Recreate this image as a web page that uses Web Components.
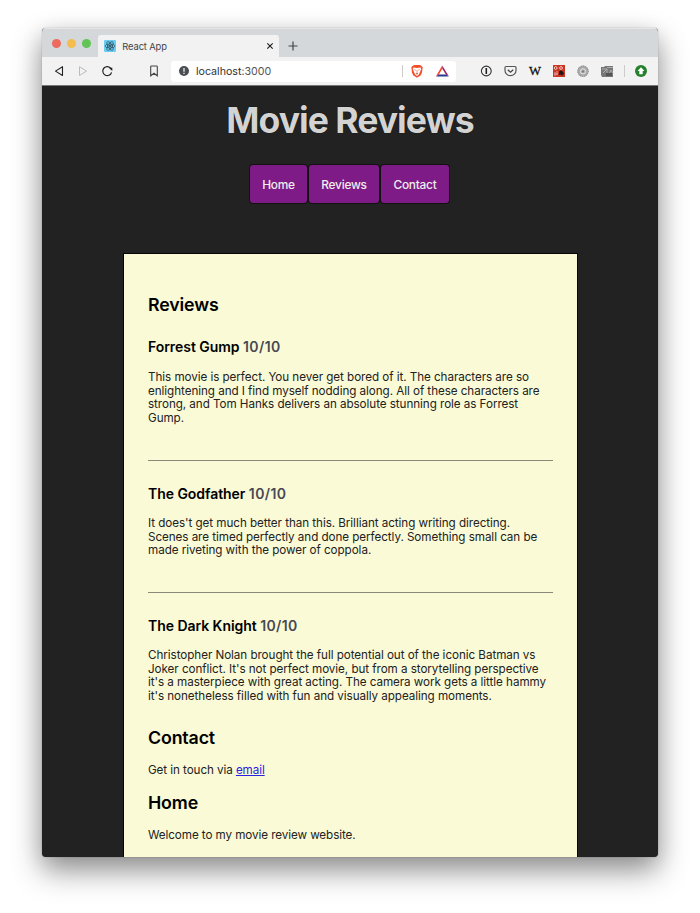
<!DOCTYPE html>
<html lang="en"><head><meta charset="utf-8"><title>React App</title>
<style>
html,body{margin:0;height:913px;overflow:hidden;background:#fff;font-family:Inter,"Liberation Sans",sans-serif}
</style></head><body>
<browser-window>
  <tab-strip slot="tabs">React App</tab-strip>
  <tool-bar slot="tools">localhost<span style="color:#555">:3000</span></tool-bar>
  <site-header>Movie Reviews
    <nav-button slot="nav" style="width:57px">Home</nav-button>
    <nav-button slot="nav" style="width:70px">Reviews</nav-button>
    <nav-button slot="nav" style="width:68px">Contact</nav-button>
  </site-header>
  <content-card>
    <section-title>Reviews</section-title>
    <movie-review movie="Forrest Gump" score="10/10" style="height:136px">This movie is perfect. You never get bored of it. The characters are so<br>enlightening and I find myself nodding along. All of these characters are<br>strong, and Tom Hanks delivers an absolute stunning role as Forrest<br>Gump.</movie-review>
    <movie-review divided movie="The Godfather" score="10/10" style="height:131px">It does't get much better than this. Brilliant acting writing directing.<br>Scenes are timed perfectly and done perfectly. Something small can be<br>made riveting with the power of coppola.</movie-review>
    <movie-review divided movie="The Dark Knight" score="10/10" style="height:131px">Christopher Nolan brought the full potential out of the iconic Batman vs<br>Joker conflict. It's not perfect movie, but from a storytelling perspective<br>it's a masterpiece with great acting. The camera work gets a little hammy<br>it's nonetheless filled with fun and visually appealing moments.</movie-review>
    <section-title>Contact</section-title>
    <text-line>Get in touch via <a href="#" style="color:#2a22e0">email</a></text-line>
    <section-title>Home</section-title>
    <text-line>Welcome to my movie review website.</text-line>
  </content-card>
</browser-window>
<script>
const define=(name,html,setup)=>{
  const t=document.createElement('template');t.innerHTML=html;
  customElements.define(name,class extends HTMLElement{
    constructor(){super();this.attachShadow({mode:'open'}).append(t.content.cloneNode(true));}
    connectedCallback(){if(setup)setup(this,this.shadowRoot);}
  });
};
define('browser-window',`<style>
:host{display:block;padding:28px 42px 0}
.win{height:829px;border-radius:4px;box-shadow:0 0 1px #0008,0 14px 30px #00000068,0 4px 22px #0000001c;background:#222}
.clip{height:829px;border-radius:4px;overflow:hidden}
</style><div class="win"><div class="clip"><slot name="tabs"></slot><slot name="tools"></slot><slot></slot></div></div>`);
define('tab-strip',`<style>
:host{display:flex;height:29px;background:#d4d8db;align-items:flex-end;box-sizing:border-box;border-top:1px solid #e4e6e8}
.lights{display:flex;gap:5.6px;padding:0 7px 9px 10px}
i{width:9.4px;height:9.4px;border-radius:50%}
.tab{display:flex;align-items:center;width:181px;height:22px;background:#f2f2f2;border-radius:3px 3px 0 0;box-sizing:border-box;padding:0 5px 0 6px;font-size:9.4px;color:#444;letter-spacing:-.15px}
.t{margin-left:6px;flex:1}
.plus{margin:0 0 6px 9px}
svg{display:block}
</style>
<div class="lights"><i style="background:#ed6a5e"></i><i style="background:#f5bd4f"></i><i style="background:#61c455"></i></div>
<div class="tab"><svg width="12" height="12" viewBox="0 0 12 12"><rect width="12" height="12" rx="1" fill="#6ccdf3"/><g fill="none" stroke="#26404c" stroke-width=".6"><ellipse cx="6" cy="6" rx="5" ry="2"/><ellipse cx="6" cy="6" rx="5" ry="2" transform="rotate(60 6 6)"/><ellipse cx="6" cy="6" rx="5" ry="2" transform="rotate(120 6 6)"/></g><circle cx="6" cy="6" r="1" fill="#26404c"/></svg><span class="t"><slot></slot></span><svg width="8" height="8" viewBox="0 0 8 8"><path d="M1.3 1.3l5.4 5.4M6.7 1.3L1.3 6.7" stroke="#222" stroke-width="1.2"/></svg></div>
<svg class="plus" width="10" height="10" viewBox="0 0 10 10"><path d="M5 .5v9M.5 5h9" stroke="#444" stroke-width="1.2"/></svg>`);
define('tool-bar',`<style>
:host{display:flex;height:29px;background:#f2f2f2;border-bottom:1px solid #777;box-sizing:border-box;align-items:center}
svg{display:block}
.nav{width:129px;height:28px;flex:none}
.url{width:285px;height:21px;background:#fff;border-radius:3px;display:flex;align-items:center;flex:none}
.addr{font-size:10.7px;color:#333;margin-left:7px;flex:1;letter-spacing:-.03px}
.info{margin-left:8px}
</style>
<svg class="nav" viewBox="0 0 129 28" fill="none"><path d="M20.5 9.7v8.8l-7-4.4z" stroke="#222" stroke-width="1.1" stroke-linejoin="round"/><path d="M37.5 9.7v8.8l7-4.4z" stroke="#bbb" stroke-linejoin="round"/><path d="M69 11.5a4.5 4.5 0 1 0 .6 3.8" stroke="#222" stroke-width="1.2"/><path d="M66.7 10.7h3.6v3.3" fill="#222"/><path d="M108.7 9.8q0-.8.8-.8h5q.8 0 .8.8v9l-3.3-2.6-3.3 2.6z" stroke="#444" stroke-width="1.1"/></svg>
<div class="url"><svg class="info" width="10" height="10" viewBox="0 0 10 10"><circle cx="5" cy="5" r="5" fill="#4b4e52"/><path d="M5 2v3.8M5 6.8v1.3" stroke="#fff" stroke-width="1.2"/></svg><span class="addr"><slot></slot></span>
<svg width="56" height="21" viewBox="400 61 56 21"><path d="M402.5 65v12" stroke="#ccc"/><path d="M414 65h6l2.7 2-.8 6-1.4 2.5-3.5 2.3-3.5-2.3-1.4-2.5-.8-6z" fill="#f3502a"/><path d="M413.5 67.4l3.5.5 3.5-.5.7 1.5-1.4 3.5-1.1 2.3-1.7 1.2-1.7-1.2-1.1-2.3-1.4-3.5z" fill="#fff"/><path d="M414.4 69.5l1.5.8M419.6 69.5l-1.5.8M417 70v3M415.8 73.5l1.2.8 1.2-.8" stroke="#f3502a" stroke-width=".6"/><path d="M442.2 65.5L436 76.3l2.7-1.5 3.6-6z" fill="#ff4724"/><path d="M442.2 65.5l6.6 10.8-2.7-1.5-3.8-6z" fill="#9e1f63"/><path d="M436 76.4h12.8l-2.7-1.9h-7.4z" fill="#2b3990"/></svg></div>
<svg width="202" height="28" viewBox="456 57 202 28" fill="none"><circle cx="486.3" cy="71" r="4.9" stroke="#333" stroke-width="1.1"/><path d="M486.3 68v6" stroke="#222" stroke-width="1.6"/><path d="M505 67.5q0-1 1-1h9q1 0 1 1v3a5.5 5.2 0 0 1-11 0z" stroke="#555" stroke-width="1.2"/><path d="M507.8 69.8l2.7 2.5 2.7-2.5" stroke="#444" stroke-width="1.2"/><text x="529" y="75.3" font-family="Liberation Serif,serif" font-size="13" stroke="#111" stroke-width=".3" fill="#111" textLength="12" lengthAdjust="spacingAndGlyphs">W</text>
<path d="M553 65h12v12h-12z" fill="#c93527"/><circle cx="555.7" cy="68" r="1.4" stroke="#f5c4b7"/><circle cx="561" cy="68" r="1.4" stroke="#f5c4b7"/><path d="M555 72v4m2-5v4m-3-1h4" stroke="#edb4a8" stroke-width=".8"/><path d="M559 71.5l2-1.3 2 1.5 1.2 2.8-1.5-.3-.5 1.8-1.6-1.4-2 .4.6-1.8z" fill="#211512"/>
<circle cx="583" cy="71.2" r="5.6" fill="#aaa"/><circle cx="583" cy="71.2" r="5.2" stroke="#888" stroke-width="1" stroke-dasharray="1 1"/><circle cx="583" cy="71.4" r="2.6" stroke="#e3e3e3" stroke-width="1"/><circle cx="583" cy="71.4" r="1" fill="#777"/>
<path d="M601 67h3l1-1h8v11h-11l-1-2z" fill="#777"/><path d="M602 69h5l-4 4m4-4v7m2-2l2-4 2 3M607 67.5h6" stroke="#bbb" stroke-width=".8"/><path d="M606 73h6v3h-6z" fill="#555"/>
<path d="M624.5 65v12" stroke="#ccc"/><circle cx="641" cy="71" r="6" fill="#25802b"/><path d="M641 67.3l3.5 3.8h-1.8v3.2h-3.4v-3.2h-1.8z" fill="#fff"/></svg>`);
define('site-header',`<style>
:host{display:flex;flex-direction:column;align-items:center;height:168px}
h1{margin:12px 0 0;height:46px;line-height:46px;font-size:35.6px;font-weight:700;color:#d3d3d3;letter-spacing:-1px;text-shadow:0 0 1px #000;white-space:nowrap}
nav{display:flex;gap:2px;margin:21px 1px 0 0}
</style><h1><slot></slot></h1><nav><slot name="nav"></slot></nav>`);
define('nav-button',`<style>
:host{display:flex;height:38px;border-radius:3px;background:#7e1b86;color:#eee;font-size:11.9px;font-weight:500;letter-spacing:-.25px;align-items:center;justify-content:center;box-shadow:0 0 0 1px #111}
</style><slot></slot>`);
define('content-card',`<style>
:host{display:block;width:405px;height:640px;margin:0 auto 0 82px;padding:37px 24px 0;background:#fafad7;box-shadow:0 0 0 1px #050505;color:#000}
</style><slot></slot>`);
define('section-title',`<style>
:host{display:block;height:33px;line-height:28px;font-size:17.8px;font-weight:600;letter-spacing:-.15px;white-space:nowrap}
</style><slot></slot>`);
define('text-line',`<style>
:host{display:block;height:32px;line-height:26px;font-size:11.65px;letter-spacing:-.07px;color:#222;white-space:nowrap}
</style><slot></slot>`);
define('movie-review',`<style>
:host{display:block;white-space:nowrap;box-sizing:border-box}
:host([divided]){height:132px;border-top:1px solid #89897a;margin-bottom:1px}
h3{margin:0;padding-top:13px;line-height:20px;height:20px;font-size:14px;font-weight:600;letter-spacing:-.05px}
:host([divided]) h3{padding-top:22.5px}
h3 span{color:#484852;letter-spacing:.4px}
p{margin:14px 0 0;font-size:11.65px;letter-spacing:-.05px;line-height:13.55px;color:#222}
:host([divided]) p{margin-top:13.5px}
</style><h3><b style="font-weight:inherit"></b> <span></span></h3><p><slot></slot></p>`,(el,r)=>{
  r.querySelector('b').textContent=el.getAttribute('movie');
  r.querySelector('span').textContent=el.getAttribute('score');
});
</script></body></html>
